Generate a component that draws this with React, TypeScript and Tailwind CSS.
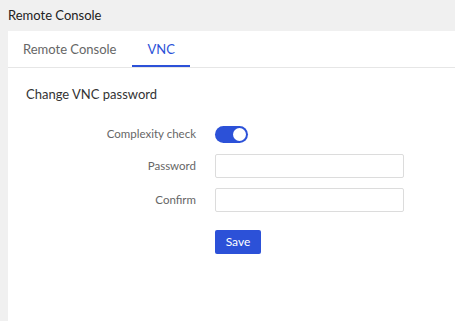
import { useState } from "react";

const FONT = { fontFamily: 'Lato, "Noto Sans", Arial, sans-serif' };

function Toggle({ on, onChange }: { on: boolean; onChange: (v: boolean) => void }) {
  return (
    <button
      type="button"
      onClick={() => onChange(!on)}
      className={`relative h-[17px] w-[33px] rounded-full ${on ? "bg-[#2c51d8]" : "bg-[#c8c8c8]"}`}
    >
      <span
        className={`absolute top-[2px] h-[13px] w-[13px] rounded-full bg-white ${on ? "left-[18px]" : "left-[2px]"}`}
      />
    </button>
  );
}

export default function App() {
  const [tab, setTab] = useState("vnc");
  const [complex, setComplex] = useState(true);

  return (
    <div className="h-[321px] overflow-hidden bg-[#f0f0f0] text-[#333]" style={FONT}>
      <div className="flex h-[31px] items-center px-2 text-[13px] text-[#222]">Remote Console</div>

      <div className="ml-2 h-[290px] bg-white">
        <div className="flex h-[37px] border-b border-[#e6e6e6]">
          <button
            onClick={() => setTab("console")}
            className={`px-[15px] pt-[2px] text-[13px] ${tab === "console" ? "border-b-2 border-[#2c51d8] text-[#2c51d8]" : "text-[#666]"}`}
          >
            Remote Console
          </button>
          <button
            onClick={() => setTab("vnc")}
            className={`ml-px px-[15px] text-[13px] ${tab === "vnc" ? "border-b-2 border-[#2c51d8] pt-[4px] text-[#2c51d8]" : "pt-[2px] text-[#666]"}`}
          >
            VNC
          </button>
        </div>

        <div className="pt-[16px]">
          <h2 className="pl-[18px] text-[13px] leading-[20px] text-[#333]">Change VNC password</h2>

          <div className="mt-[20px] grid grid-cols-[188px_1fr] items-center gap-x-[19px] gap-y-[10px] text-[11.5px] text-[#666]">
            <label className="text-right">Complexity check</label>
            <div className="flex h-[20px] items-center">
              <Toggle on={complex} onChange={setComplex} />
            </div>

            <label className="text-right">Password</label>
            <input type="password" className="h-[24px] w-[189px] rounded-[2px] border border-[#dcdcdc] px-2 outline-none" />

            <label className="text-right">Confirm</label>
            <input type="password" className="h-[24px] w-[189px] rounded-[2px] border border-[#dcdcdc] px-2 outline-none" />

            <div />
            <button className="mt-[8px] h-[24px] w-[46px] rounded-[2px] bg-[#2c51d8] text-[12px] text-white">Save</button>
          </div>
        </div>
      </div>
    </div>
  );
}
